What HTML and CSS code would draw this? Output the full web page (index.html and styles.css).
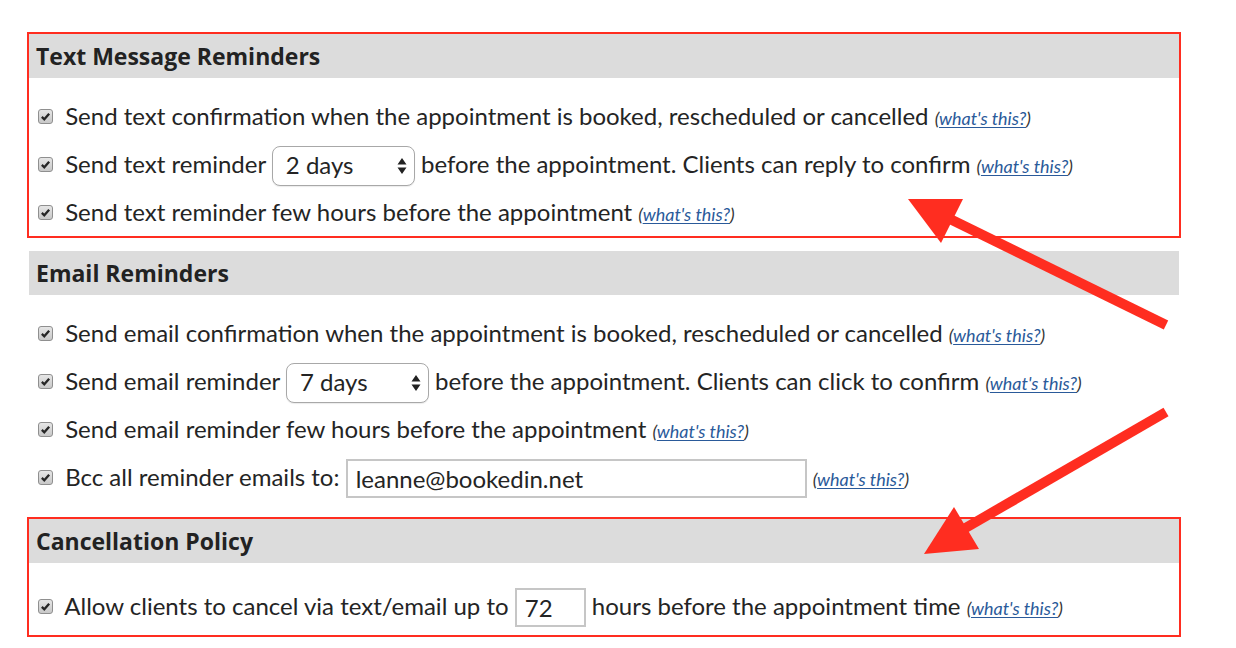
FILE: index.html
```html
<!DOCTYPE html>
<html lang="en">
<head>
    <meta charset="UTF-8">
    <meta name="viewport" content="width=device-width, initial-scale=1.0">
    <title>Reminder Settings</title>
    <link rel="stylesheet" href="styles.css">
</head>
<body>

    <div class="settings">

        <!-- Text message reminders -->
        <section class="group flagged">
            <h3 class="group-title">Text Message Reminders</h3>
            <div class="group-body">
                <label class="option">
                    <span class="check"><svg viewBox="0 0 16 16"><path d="M3.5 8.5 L6.5 11.5 L12.5 4.5"/></svg></span>
                    Send text confirmation when the appointment is booked, rescheduled or cancelled
                    <span class="help">(<a href="#">what's this?</a>)</span>
                </label>
                <label class="option">
                    <span class="check"><svg viewBox="0 0 16 16"><path d="M3.5 8.5 L6.5 11.5 L12.5 4.5"/></svg></span>
                    Send text reminder
                    <span class="select-wrap">
                        <select class="select">
                            <option>1 day</option>
                            <option selected>2 days</option>
                            <option>3 days</option>
                        </select>
                        <svg class="select-arrows" viewBox="0 0 10 18"><path d="M5 1 L9.5 7.5 H0.5 Z M5 17 L9.5 10.5 H0.5 Z"/></svg>
                    </span>
                    before the appointment. Clients can reply to confirm
                    <span class="help">(<a href="#">what's this?</a>)</span>
                </label>
                <label class="option">
                    <span class="check"><svg viewBox="0 0 16 16"><path d="M3.5 8.5 L6.5 11.5 L12.5 4.5"/></svg></span>
                    Send text reminder few hours before the appointment
                    <span class="help">(<a href="#">what's this?</a>)</span>
                </label>
            </div>
        </section>

        <!-- Email reminders -->
        <section class="group email">
            <h3 class="group-title">Email Reminders</h3>
            <div class="group-body">
                <label class="option">
                    <span class="check"><svg viewBox="0 0 16 16"><path d="M3.5 8.5 L6.5 11.5 L12.5 4.5"/></svg></span>
                    Send email confirmation when the appointment is booked, rescheduled or cancelled
                    <span class="help">(<a href="#">what's this?</a>)</span>
                </label>
                <label class="option">
                    <span class="check"><svg viewBox="0 0 16 16"><path d="M3.5 8.5 L6.5 11.5 L12.5 4.5"/></svg></span>
                    Send email reminder
                    <span class="select-wrap">
                        <select class="select">
                            <option>1 day</option>
                            <option>3 days</option>
                            <option selected>7 days</option>
                        </select>
                        <svg class="select-arrows" viewBox="0 0 10 18"><path d="M5 1 L9.5 7.5 H0.5 Z M5 17 L9.5 10.5 H0.5 Z"/></svg>
                    </span>
                    before the appointment. Clients can click to confirm
                    <span class="help">(<a href="#">what's this?</a>)</span>
                </label>
                <label class="option">
                    <span class="check"><svg viewBox="0 0 16 16"><path d="M3.5 8.5 L6.5 11.5 L12.5 4.5"/></svg></span>
                    Send email reminder few hours before the appointment
                    <span class="help">(<a href="#">what's this?</a>)</span>
                </label>
                <label class="option">
                    <span class="check"><svg viewBox="0 0 16 16"><path d="M3.5 8.5 L6.5 11.5 L12.5 4.5"/></svg></span>
                    Bcc all reminder emails to:
                    <input type="text" class="field field-email" value="leanne@bookedin.net">
                    <span class="help">(<a href="#">what's this?</a>)</span>
                </label>
            </div>
        </section>

        <!-- Cancellation policy -->
        <section class="group flagged policy">
            <h3 class="group-title">Cancellation Policy</h3>
            <div class="group-body">
                <label class="option">
                    <span class="check"><svg viewBox="0 0 16 16"><path d="M3.5 8.5 L6.5 11.5 L12.5 4.5"/></svg></span>
                    Allow clients to cancel via text/email up to
                    <input type="text" class="field field-hours" value="72">
                    hours before the appointment time
                    <span class="help">(<a href="#">what's this?</a>)</span>
                </label>
            </div>
        </section>

    </div>

    <!-- Annotation arrows drawn over the page -->
    <svg class="annotations" viewBox="0 0 1236 648">
        <line x1="1166" y1="325" x2="950" y2="219"/>
        <polygon points="908,199 963,199 941,243"/>
        <line x1="1166" y1="412" x2="962" y2="530"/>
        <polygon points="954,507 979,549 924,554"/>
    </svg>

</body>
</html>
```

FILE: styles.css
```css
body {
    font-family: Lato, "Open Sans", sans-serif;
    color: #242424;
    background-color: #fff;
    margin: 0;
}
.settings {
    width: 1154px;
    margin-left: 27px;
    padding-top: 32px;
}
.group {
    border: 2px solid transparent;
    margin-bottom: 11px;
}
.group.flagged {
    border-color: #ff2d20;
}
.group.email {
    margin-bottom: 14px;
}
.group-title {
    margin: 0;
    height: 44px;
    line-height: 44px;
    padding-left: 7px;
    background-color: #dcdcdc;
    font-family: "Open Sans", sans-serif;
    font-size: 23px;
    font-weight: bold;
    color: #222;
}
.group-body {
    padding: 14px 0 0 9px;
}
.policy .group-body {
    padding: 19px 0 5px 9px;
}
.option {
    display: block;
    height: 48px;
    line-height: 48px;
    font-size: 24px;
    white-space: nowrap;
}
.check {
    display: inline-block;
    vertical-align: middle;
    position: relative;
    top: -2px;
    width: 15px;
    height: 15px;
    margin-right: 6px;
    box-sizing: border-box;
    border: 1px solid #8f8f8f;
    border-radius: 3px;
    background: linear-gradient(#e6e6e6, #c8c8c8);
    line-height: 0;
}
.check svg {
    display: block;
    width: 13px;
    height: 13px;
    fill: none;
    stroke: #262626;
    stroke-width: 2.8;
}
.help {
    font-size: 18px;
    font-style: italic;
    color: #333;
}
.help a {
    color: #2a5a9a;
    text-decoration-thickness: 1px;
    text-underline-offset: 2px;
}
.select-wrap {
    display: inline-block;
    vertical-align: middle;
    position: relative;
    top: -1px;
    line-height: normal;
}
.select {
    appearance: none;
    -webkit-appearance: none;
    display: block;
    width: 143px;
    height: 40px;
    padding: 0 0 2px 13px;
    border: 1.5px solid #a8a8a8;
    border-radius: 8px;
    background-color: #fff;
    box-shadow: 0 1px 1px rgba(0, 0, 0, 0.08);
    font-family: inherit;
    font-size: 24px;
    color: #242424;
}
.select-arrows {
    position: absolute;
    right: 8px;
    top: 11px;
    width: 10px;
    height: 18px;
    fill: #222;
    pointer-events: none;
}
.field {
    vertical-align: middle;
    position: relative;
    top: -1px;
    height: 39px;
    box-sizing: border-box;
    border: 2px solid #c6c6c6;
    padding: 0 8px;
    font-family: inherit;
    font-size: 24px;
    color: #242424;
}
.field-email {
    width: 461px;
}
.field-hours {
    width: 71px;
}
.annotations {
    position: absolute;
    top: 0;
    left: 0;
    width: 1236px;
    height: 648px;
    pointer-events: none;
}
.annotations line {
    stroke: #ff2d20;
    stroke-width: 10;
}
.annotations polygon {
    fill: #ff2d20;
}
```
